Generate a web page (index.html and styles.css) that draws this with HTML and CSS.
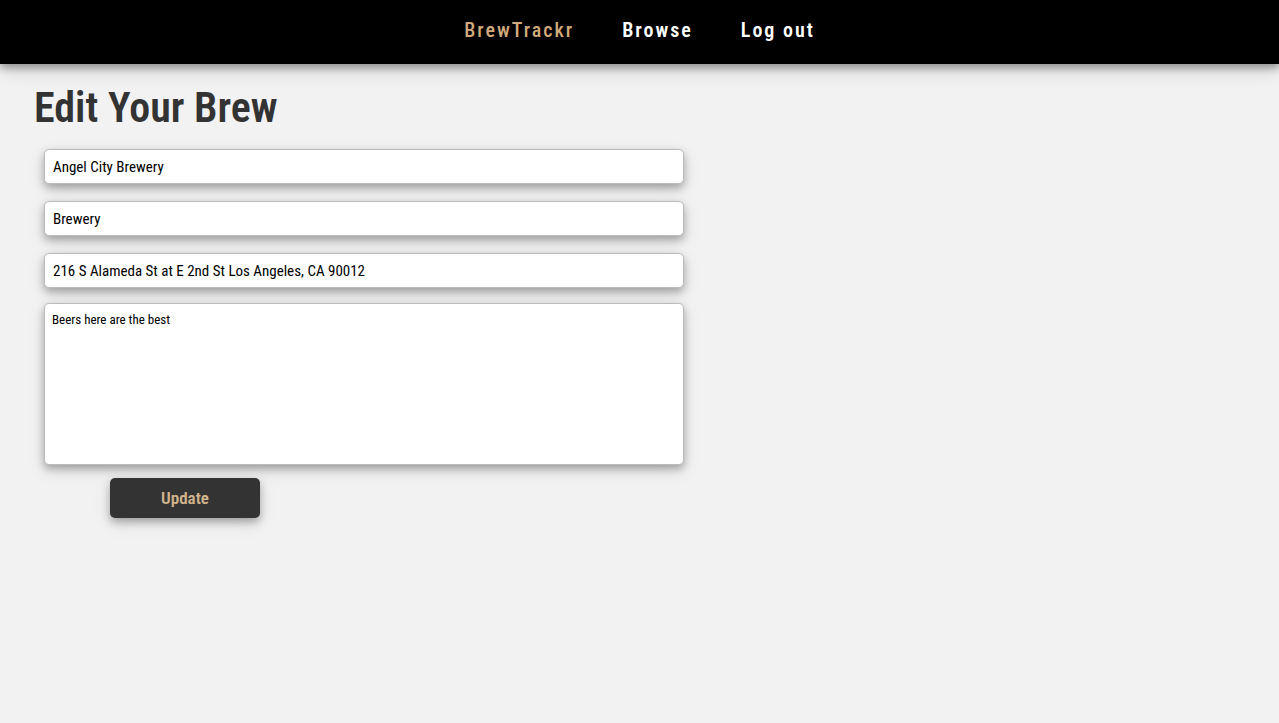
FILE: index.html
```html
<!DOCTYPE html>
<html lang="en">
<head>
<meta charset="utf-8">
<title>BrewTrackr</title>
<link rel="stylesheet" href="styles.css">
</head>
<body>
<header class="site-header">
  <nav class="nav">
    <a class="nav-link brand" href="#">BrewTrackr</a>
    <a class="nav-link" href="#">Browse</a>
    <a class="nav-link" href="#">Log out</a>
  </nav>
</header>
<main class="page">
  <h1 class="title">Edit Your Brew</h1>
  <form class="form">
    <input class="field" type="text" aria-label="Name" value="Angel City Brewery">
    <input class="field" type="text" aria-label="Category" value="Brewery">
    <input class="field" type="text" aria-label="Address" value="216 S Alameda St at E 2nd St Los Angeles, CA 90012">
    <textarea class="field notes" aria-label="Description">Beers here are the best</textarea>
    <button class="submit" type="submit">Update</button>
  </form>
</main>
</body>
</html>
```
FILE: styles.css
```css
* {
  box-sizing: border-box;
}

body {
  margin: 0;
  background: #f2f2f2;
  color: #333;
  font-family: "Roboto Condensed", "Liberation Sans Narrow", Roboto, sans-serif;
}

.site-header {
  background: #000;
  box-shadow: 0 4px 8px rgba(0, 0, 0, 0.35), 0 6px 20px rgba(0, 0, 0, 0.12);
}

.nav {
  display: flex;
  justify-content: center;
  gap: 48px;
  padding: 16px 0 20px;
}

.nav-link {
  color: #fff;
  font-size: 20px;
  font-weight: 600;
  line-height: 28px;
  letter-spacing: 2px;
  text-decoration: none;
}

.brand {
  color: #d2aa7c;
  font-weight: 500;
}

.page {
  padding: 14px 34px;
}

.title {
  margin: 0;
  font-size: 42px;
  font-weight: 600;
  line-height: 60px;
}

.form {
  display: flex;
  flex-direction: column;
  width: 50vw;
  margin: 11px 10px;
}

.field {
  height: 35px;
  margin: 0 0 17px;
  padding: 0 8px;
  border: 1px solid #bbb;
  border-radius: 5px;
  background: #fff;
  color: #000;
  font-family: inherit;
  font-size: 15px;
  box-shadow: 0 4px 8px rgba(0, 0, 0, 0.3), 0 6px 20px rgba(0, 0, 0, 0.08);
}

.notes {
  height: 162px;
  margin: -2px 0 13px;
  padding: 7px;
  font-size: 13px;
  line-height: 18px;
  resize: none;
}

.submit {
  width: 150px;
  height: 40px;
  margin-left: 66px;
  border: 0;
  border-radius: 5px;
  background: #333;
  color: #d2b48c;
  font-family: inherit;
  font-size: 17px;
  font-weight: 600;
  box-shadow: 0 4px 8px rgba(0, 0, 0, 0.3), 0 6px 20px rgba(0, 0, 0, 0.08);
}
```
